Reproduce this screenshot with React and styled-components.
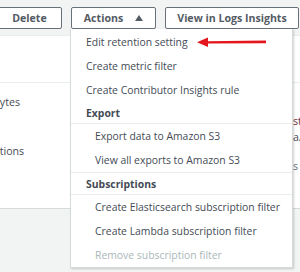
import React from "react";
import styled, { createGlobalStyle } from "styled-components";

const GlobalStyle = createGlobalStyle`
  html, body {
    margin: 0;
    padding: 0;
    background: #ffffff;
  }
  body {
    font-family: "Open Sans", "Noto Sans", Arial, sans-serif;
    overflow: hidden;
  }
`;

const Page = styled.div`
  position: relative;
  width: 300px;
  height: 272px;
  overflow: hidden;
  background: #ffffff;
`;

const Toolbar = styled.div`
  display: flex;
  gap: 9px;
  height: 36px;
  box-sizing: border-box;
  padding-top: 7px;
  margin-left: -3px;
  background: #f2f3f3;
  border-bottom: 1px solid #eaeded;
`;

const Button = styled.button`
  display: flex;
  align-items: center;
  justify-content: center;
  gap: 12px;
  height: 22px;
  width: ${(p) => p.$width}px;
  padding: 0;
  box-sizing: border-box;
  border: 1px solid #687078;
  border-radius: 2px;
  background: #ffffff;
  color: #545b64;
  font-family: "Open Sans", "Noto Sans", Arial, sans-serif;
  font-size: 10.6px;
  font-weight: 700;
  flex-shrink: 0;
`;

const Caret = styled.span`
  width: 0;
  height: 0;
  border-left: 4px solid transparent;
  border-right: 4px solid transparent;
  border-bottom: 6px solid #545b64;
  margin-top: -1px;
`;

const ActionsWrap = styled.div`
  position: relative;
`;

const Menu = styled.ul`
  position: absolute;
  top: 22px;
  left: -1px;
  z-index: 2;
  width: 223px;
  margin: 0;
  padding: 1px 0 0;
  list-style: none;
  box-sizing: border-box;
  background: #ffffff;
  border: 1px solid #d5dbdb;
  border-top: none;
  box-shadow: 1px 1px 2px rgba(0, 0, 0, 0.18);
`;

const Item = styled.li`
  display: flex;
  align-items: center;
  height: 24px;
  padding-left: ${(p) => (p.$nested ? 24 : 15)}px;
  color: ${(p) => (p.$disabled ? "#aab7b8" : "#444b55")};
  font-size: 10.4px;
  white-space: nowrap;
`;

const Group = styled.li`
  border-top: ${(p) => (p.$divided ? "1px solid #eaeded" : "none")};
`;

const GroupTitle = styled.div`
  display: flex;
  align-items: center;
  height: 22px;
  box-sizing: border-box;
  padding-left: 15px;
  border-bottom: 1px solid #eaeded;
  color: #444b55;
  font-size: 10.4px;
  font-weight: 700;
`;

const GroupList = styled.ul`
  margin: 0;
  padding: 0;
  list-style: none;
`;

const Table = styled.div`
  display: flex;
  flex-direction: column;
`;

const HeadRow = styled.div`
  height: 46px;
  border-bottom: 1px solid #eaeded;
`;

const BodyRow = styled.div`
  display: grid;
  grid-template-columns: 293px 1fr;
  height: 125px;
`;

const LeftCell = styled.div`
  display: flex;
  flex-direction: column;
  gap: 35px;
  padding-top: 12px;
  overflow: hidden;
`;

const RightCell = styled.div`
  display: flex;
  flex-direction: column;
  padding-top: 31px;
  overflow: hidden;
  white-space: nowrap;
`;

const CellText = styled.span`
  display: block;
  line-height: 14px;
  font-size: 10.6px;
  color: ${(p) => p.$color || "#444b55"};
  margin-left: ${(p) => p.$shift || 0}px;
  margin-top: ${(p) => p.$gap || 0}px;
  white-space: nowrap;
`;

const Footer = styled.div`
  height: 64px;
  background: #f2f3f3;
  border-top: 1px solid #d5dbdb;
`;

const Arrow = styled.svg`
  position: absolute;
  left: 196px;
  top: 36px;
  z-index: 3;
`;

const App = () => {
  return (
    <Page>
      <GlobalStyle />
      <Toolbar>
        <Button $width={65}>Delete</Button>
        <ActionsWrap>
          <Button $width={85}>
            Actions
            <Caret />
          </Button>
          <Menu>
            <Item>Edit retention setting</Item>
            <Item>Create metric filter</Item>
            <Item>Create Contributor Insights rule</Item>
            <Group>
              <GroupTitle>Export</GroupTitle>
              <GroupList>
                <Item $nested>Export data to Amazon S3</Item>
                <Item $nested>View all exports to Amazon S3</Item>
              </GroupList>
            </Group>
            <Group $divided>
              <GroupTitle>Subscriptions</GroupTitle>
              <GroupList>
                <Item $nested>Create Elasticsearch subscription filter</Item>
                <Item $nested>Create Lambda subscription filter</Item>
                <Item $nested $disabled>
                  Remove subscription filter
                </Item>
              </GroupList>
            </Group>
          </Menu>
        </ActionsWrap>
        <Button $width={134}>View in Logs Insights</Button>
      </Toolbar>
      <Table>
        <HeadRow />
        <BodyRow>
          <LeftCell>
            <CellText $shift={-7}>Bytes</CellText>
            <CellText $shift={-15}>Options</CellText>
          </LeftCell>
          <RightCell>
            <CellText $color="#6b2d3c">st</CellText>
            <CellText $gap={2}>a/</CellText>
            <CellText $gap={15} $color="#687078">
              s
            </CellText>
          </RightCell>
        </BodyRow>
        <Footer />
      </Table>
      <Arrow width="72" height="12" viewBox="0 0 72 12">
        <path d="M10 5.2 L70 4.6 L70 7.2 L10 7.6 Z" fill="#e3161b" />
        <path d="M1 6.2 L12 1.4 L12 11 Z" fill="#e3161b" />
      </Arrow>
    </Page>
  );
};

export default App;
